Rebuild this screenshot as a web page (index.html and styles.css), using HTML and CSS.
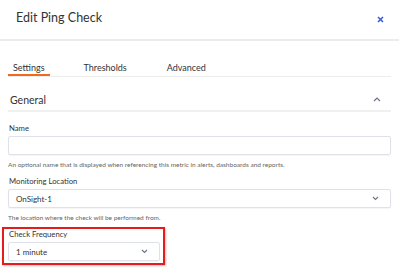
FILE: index.html
```html
<!DOCTYPE html>
<html>
<head>
<meta charset="utf-8">
<link rel="stylesheet" href="styles.css">
</head>
<body>
<div class="modal">
  <header class="head">
    <h1 class="title">Edit Ping Check</h1>
    <span class="close"><svg width="7" height="7" viewBox="0 0 7 7"><path d="M1 1L6 6M6 1L1 6" stroke="#3b5bdb" stroke-width="1.6" fill="none"/></svg></span>
  </header>
  <nav class="tabs">
    <span class="tab active">Settings</span>
    <span class="tab">Thresholds</span>
    <span class="tab">Advanced</span>
  </nav>
  <section class="sec">
    <div class="sec-head">
      <span class="sec-title">General</span>
      <svg class="chev" width="8" height="5" viewBox="0 0 8 5"><path d="M1 4L4 1L7 4" stroke="#6b7385" stroke-width="1.2" fill="none"/></svg>
    </div>
    <div class="field first">
      <label class="label">Name</label>
      <div class="input"></div>
      <p class="help">An optional name that is displayed when referencing this metric in alerts, dashboards and reports.</p>
    </div>
    <div class="field">
      <label class="label">Monitoring Location</label>
      <div class="input select"><span>OnSight-1</span><svg class="dchev" width="7" height="5" viewBox="0 0 7 5"><path d="M1 1L3.5 3.5L6 1" stroke="#6b7385" stroke-width="1.1" fill="none"/></svg></div>
      <p class="help">The location where the check will be performed from.</p>
    </div>
    <div class="field hl">
      <label class="label">Check Frequency</label>
      <div class="input select short"><span>1 minute</span><svg class="dchev" width="7" height="5" viewBox="0 0 7 5"><path d="M1 1L3.5 3.5L6 1" stroke="#6b7385" stroke-width="1.1" fill="none"/></svg></div>
    </div>
    <p class="help">How often the check will be performed.</p>
  </section>
</div>
</body>
</html>
```
FILE: styles.css
```css
html, body { margin: 0; padding: 0; background: #fff; }
body { font-family: Lato, "Noto Sans", sans-serif; color: #333; overflow: hidden; height: 269px; }
.modal { width: 399px; }
.head { display: flex; align-items: center; justify-content: space-between; padding: 0 15px 0 16px; border-bottom: 2px solid #ececec; box-sizing: border-box; height: 41px; }
.title { font-size: 12.5px; line-height: 15px; font-weight: 400; margin: 0 0 5px; color: #333; }
.close { display: flex; margin-bottom: 1px; }
.tabs { display: flex; margin: 22px 8px 0; border-bottom: 1px solid #ececec; }
.tab { font-size: 9px; line-height: 10px; padding: 0 5px 1px; color: #333; }
.tab.active { border-bottom: 2px solid #f06a1e; }
.tab + .tab { margin-left: 29px; }
.tab:nth-child(3) { margin-left: 30px; }
.sec { padding: 0 8px; }
.sec-head { display: flex; align-items: flex-end; justify-content: space-between; height: 35px; border-bottom: 2px solid #f0f0f0; padding: 0 10px 4px 2px; box-sizing: border-box; }
.sec-title { font-size: 10.5px; line-height: 12px; }
.chev { margin-bottom: 4px; }
.field { display: flex; flex-direction: column; }
.label { font-size: 7.7px; line-height: 10px; margin: 7px 0 3px 1px; }
.first .label { margin-top: 11px; }
.input { height: 19px; border: 1px solid #dfe1e8; border-radius: 2px; box-sizing: border-box; box-shadow: 0 1px 1px rgba(0,0,0,0.04); }
.select { display: flex; align-items: center; justify-content: space-between; padding: 0 11px 0 7px; font-size: 8px; }
.help { font-size: 6.5px; line-height: 8px; color: #666; margin: 6px 0 0; }
.hl { margin: 5px 0 0 -6px; width: 163px; border: 2px solid #e51c1c; box-sizing: border-box; padding: 0 4px 2px 4px; box-shadow: 1px 1px 2px rgba(0,0,0,0.25); }
.hl .label { margin: 0 0 3px 1px; }
.short { width: 152px; }
```
